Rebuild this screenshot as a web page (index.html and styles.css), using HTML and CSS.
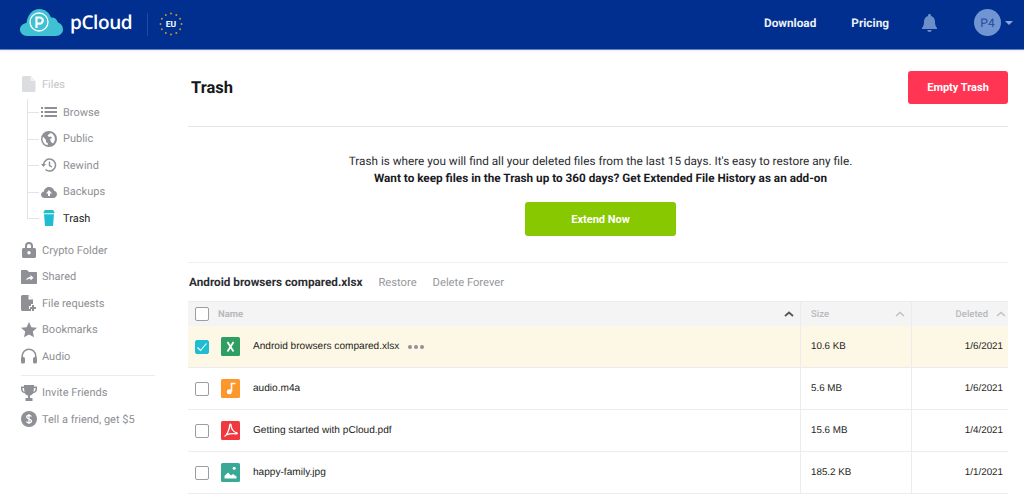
FILE: index.html
```html
<!DOCTYPE html>
<html lang="en">
<head>
<meta charset="utf-8">
<title>pCloud - Trash</title>
<link rel="stylesheet" href="styles.css">
</head>
<body>
<header class="topbar">
  <div class="brand">
    <svg class="logo" width="43" height="27" viewBox="0 0 43 27">
      <path fill="#3fc1d3" d="M7 27C3 27 0 24 0 20.500 0 17 3 14.500 6.500 14 7.500 6 12.500 0 19.500 0 25 0 29 3.500 31 8.500 34 8 37 10 38 13.500 41 14.500 43 17 43 20.500 43 24 40 27 36 27Z"/>
      <circle cx="19" cy="13" r="9" fill="none" stroke="#fff" stroke-width="1.300"/>
      <path fill="none" stroke="#fff" stroke-width="2.200" d="M16.500 19V8.500h3.200a3.100 3.100 0 0 1 0 6.200h-3.200"/>
    </svg>
    <span class="wordmark">pCloud</span>
    <span class="brand-sep"></span>
    <svg class="eu" width="24" height="24" viewBox="0 0 24 24">
      <g fill="#c2982f">
        <circle cx="12" cy="1.500" r="1"/><circle cx="17.300" cy="2.900" r="1"/><circle cx="21.100" cy="6.800" r="1"/><circle cx="22.500" cy="12" r="1"/><circle cx="21.100" cy="17.300" r="1"/><circle cx="17.300" cy="21.100" r="1"/><circle cx="12" cy="22.500" r="1"/><circle cx="6.800" cy="21.100" r="1"/><circle cx="2.900" cy="17.300" r="1"/><circle cx="1.500" cy="12" r="1"/><circle cx="2.900" cy="6.800" r="1"/><circle cx="6.800" cy="2.900" r="1"/>
      </g>
      <text x="12" y="15" text-anchor="middle" class="eu-text">EU</text>
    </svg>
  </div>
  <nav class="topnav">
    <a class="topnav-link link-download">Download</a>
    <a class="topnav-link link-pricing">Pricing</a>
    <svg class="bell" width="15" height="18" viewBox="0 0 15 18"><path fill="#6d8fc9" d="M7.500 0C8.400 0 9 .6 9 1.500v.4c2.500.7 4 2.900 4 5.600 0 3.500.7 4.800 2 6.500v1H0v-1c1.300-1.700 2-3 2-6.500 0-2.700 1.500-4.900 4-5.600v-.4C6 .6 6.600 0 7.500 0ZM5.300 16h4.400a2.200 2 0 0 1-4.400 0Z"/></svg>
    <div class="avatar">P4</div>
    <span class="caret"></span>
  </nav>
</header>

<div class="layout">
  <aside class="sidebar">
    <div class="side-item top-item">
      <svg class="ico" width="14" height="16" viewBox="0 0 14 16"><path fill="#dcdde0" d="M1.500 0H8.500L13.500 5V14.500a1.500 1.500 0 0 1-1.500 1.500H1.500A1.500 1.500 0 0 1 0 14.500V1.500A1.500 1.500 0 0 1 1.500 0Z"/><path fill="#f2f2f3" d="M8.500 0V5H13.500Z"/></svg>
      <span class="faded">Files</span>
    </div>
    <div class="tree">
      <div class="side-item tree-item">
        <svg class="ico" width="16" height="16" viewBox="0 0 16 16"><path fill="#8f9095" d="M0 3h2v2H0Zm3.500 0H16v2H3.500ZM0 7h2v2H0Zm3.500 0H16v2H3.500ZM0 11h2v2H0Zm3.500 0H16v2H3.500Z"/></svg>
        <span>Browse</span>
      </div>
      <div class="side-item tree-item">
        <svg class="ico" width="16" height="16" viewBox="0 0 16 16"><path fill="#8f9095" fill-rule="evenodd" d="M8 0a8 8 0 1 1 0 16A8 8 0 0 1 8 0ZM2 5.500 1.500 8c0 3 2 5.500 5 6.300L7 12.500 5 11V9L2 5.500ZM10 2l-2 1-1.500 1.500L8 6l2-.5 1 1.500-2 1 1 3 2 1.500A6.500 6.500 0 0 0 10 2Z"/></svg>
        <span>Public</span>
      </div>
      <div class="side-item tree-item">
        <svg class="ico" width="16" height="16" viewBox="0 0 16 16"><path fill="none" stroke="#8f9095" stroke-width="1.500" d="M2.500 8a6 6 0 1 1 2 4.500"/><path fill="#8f9095" d="M0 7h5L2.500 10Z"/><path fill="none" stroke="#8f9095" stroke-width="1.400" d="M8.500 4.500V8.500L11 10"/></svg>
        <span>Rewind</span>
      </div>
      <div class="side-item tree-item">
        <svg class="ico" width="16" height="16" viewBox="0 0 16 16"><path fill="#8f9095" fill-rule="evenodd" d="M3.500 14C1.500 14 0 12.500 0 10.700 0 9 1.200 7.700 2.800 7.400 3.300 4.700 5.500 3 8.200 3c2.400 0 4.400 1.500 5 3.700 1.600.4 2.800 1.900 2.800 3.600 0 2-1.600 3.700-3.700 3.700ZM8 6 5 9.500h2V12h2V9.500h2Z"/></svg>
        <span>Backups</span>
      </div>
      <div class="side-item tree-item active">
        <svg class="ico" width="16" height="16" viewBox="0 0 16 16"><path fill="#1fbcd2" d="M3.500 0h9v1.200l1 .5v1.600h-11V1.700l1-.5ZM3 4.300h10L12 16H4Z"/></svg>
        <span>Trash</span>
      </div>
    </div>
    <div class="group">
      <div class="side-item top-item">
        <svg class="ico" width="14" height="16" viewBox="0 0 14 16"><path fill="#8f9095" fill-rule="evenodd" d="M3 6V4a4 4 0 0 1 8 0v2h1.500c.8 0 1.500.7 1.500 1.500v7c0 .8-.7 1.500-1.500 1.500h-11C.7 16 0 15.300 0 14.500v-7C0 6.700.7 6 1.500 6ZM5 6h4V4a2 2 0 0 0-4 0ZM7 9a1.700 1.700 0 1 0 0 3.400A1.700 1.700 0 0 0 7 9Z"/></svg>
        <span>Crypto Folder</span>
      </div>
      <div class="side-item top-item">
        <svg class="ico" width="16" height="14" viewBox="0 0 16 14"><path fill="#8f9095" fill-rule="evenodd" d="M1 0h5l2 2h7c.6 0 1 .4 1 1v10c0 .6-.4 1-1 1H1c-.6 0-1-.4-1-1V1C0 .4.400 0 1 0Zm8.500 5v1.800C7 7 5.500 8.500 5 10.500 6.200 9.300 7.500 8.800 9.500 8.800v1.700L12.500 7.700Z"/></svg>
        <span>Shared</span>
      </div>
      <div class="side-item top-item">
        <svg class="ico" width="16" height="16" viewBox="0 0 16 16"><path fill="#8f9095" d="M1.500 0H7.500L12 4.500V9H10V11H8V14H10V16H1.500A1.500 1.500 0 0 1 0 14.500V1.500A1.500 1.500 0 0 1 1.500 0Z"/><path fill="#fff" d="M7.500 0V4.500H12Z"/><path fill="#8f9095" d="M11 10h2v2h2v2h-2v2h-2v-2H9v-2h2Z"/></svg>
        <span>File requests</span>
      </div>
      <div class="side-item top-item">
        <svg class="ico" width="16" height="16" viewBox="0 0 16 16"><path fill="#8f9095" d="M8 0l2.400 5.200 5.600.6-4.200 3.800 1.200 5.600L8 12.400 3 15.200l1.200-5.600L0 5.800l5.600-.6Z"/></svg>
        <span>Bookmarks</span>
      </div>
      <div class="side-item top-item">
        <svg class="ico" width="16" height="16" viewBox="0 0 16 16"><path fill="none" stroke="#8f9095" stroke-width="1.600" d="M1.200 11V8a6.800 6.800 0 0 1 13.600 0v3"/><rect fill="#8f9095" x="0" y="9" width="4" height="6.500" rx="1.500"/><rect fill="#8f9095" x="12" y="9" width="4" height="6.500" rx="1.500"/></svg>
        <span>Audio</span>
      </div>
    </div>
    <div class="side-divider"></div>
    <div class="side-item top-item">
      <svg class="ico" width="16" height="16" viewBox="0 0 16 16"><path fill="#8f9095" fill-rule="evenodd" d="M3 0h10v1.500h3V4c0 2.500-1.600 4-3.800 4.300C11.500 9.500 10.500 10.300 9 10.600V13h2.500v3h-7v-3H7v-2.400C5.500 10.300 4.500 9.500 3.800 8.300 1.600 8 0 6.500 0 4V1.500h3ZM1.500 3v1c0 1.500.8 2.500 2 2.800L3 3Zm13 0H13l-.5 3.800c1.200-.3 2-1.300 2-2.800Z"/></svg>
      <span>Invite Friends</span>
    </div>
    <div class="side-item top-item">
      <svg class="ico" width="16" height="16" viewBox="0 0 16 16"><circle cx="8" cy="8" r="8" fill="#8f9095"/><path fill="none" stroke="#fff" stroke-width="1.300" d="M10.500 5.500C10 4.600 9 4.300 8 4.300 6.700 4.300 5.700 5 5.700 6s1 1.500 2.300 1.900 2.500 1 2.500 2.100-1.200 1.800-2.500 1.800c-1.100 0-2.100-.4-2.600-1.300M8 3v10"/></svg>
      <span>Tell a friend, get $5</span>
    </div>
  </aside>

  <main class="content">
    <div class="page-head">
      <h1 class="page-title">Trash</h1>
      <button class="btn btn-red">Empty Trash</button>
    </div>
    <section class="notice">
      <p class="notice-line">Trash is where you will find all your deleted files from the last 15 days. It's easy to restore any file.</p>
      <p class="notice-line notice-strong">Want to keep files in the Trash up to 360 days? Get Extended File History as an add-on</p>
      <button class="btn btn-green">Extend Now</button>
    </section>
    <div class="selection-bar">
      <span class="selected-name">Android browsers compared.xlsx</span>
      <a class="action">Restore</a>
      <a class="action">Delete Forever</a>
    </div>
    <div class="table">
      <div class="row head">
        <div class="cell-name">
          <span class="check"></span>
          <span class="head-label">Name</span>
          <svg class="sort dark" width="10" height="6" viewBox="0 0 10 6"><path fill="none" stroke="#55565a" stroke-width="1.800" d="M1 5l4-3.500L9 5"/></svg>
        </div>
        <div class="cell-size">
          <span class="head-label">Size</span>
          <svg class="sort" width="10" height="6" viewBox="0 0 10 6"><path fill="none" stroke="#bfc0c4" stroke-width="1.400" d="M1 5l4-3.500L9 5"/></svg>
        </div>
        <div class="cell-date">
          <span class="head-label">Deleted</span>
          <svg class="sort date-sort" width="10" height="6" viewBox="0 0 10 6"><path fill="none" stroke="#bfc0c4" stroke-width="1.400" d="M1 5l4-3.500L9 5"/></svg>
        </div>
      </div>
      <div class="row selected">
        <div class="cell-name">
          <span class="check checked"><svg width="12" height="10" viewBox="0 0 12 10"><path fill="none" stroke="#fff" stroke-width="1.100" d="M1.500 5.500l3 3 6-7"/></svg></span>
          <svg class="file" width="19" height="19" viewBox="0 0 19 19"><rect width="19" height="19" rx="1.500" fill="#2f9e62"/><path fill="none" stroke="#fff" stroke-width="1.800" d="M6.500 5l6 9.500M12.500 5l-6 9.500"/></svg>
          <span class="file-name">Android browsers compared.xlsx</span>
          <span class="dots"><i></i><i></i><i></i></span>
        </div>
        <div class="cell-size">10.6 KB</div>
        <div class="cell-date">1/6/2021</div>
      </div>
      <div class="row">
        <div class="cell-name">
          <span class="check"></span>
          <svg class="file" width="19" height="19" viewBox="0 0 19 19"><rect width="19" height="19" rx="1.500" fill="#fd972b"/><path fill="none" stroke="#fff" stroke-width="1.600" d="M10.500 12.500V4.500h4"/><circle cx="8.300" cy="12.800" r="2.500" fill="#fff"/></svg>
          <span class="file-name">audio.m4a</span>
        </div>
        <div class="cell-size">5.6 MB</div>
        <div class="cell-date">1/6/2021</div>
      </div>
      <div class="row">
        <div class="cell-name">
          <span class="check"></span>
          <svg class="file" width="19" height="19" viewBox="0 0 19 19"><rect width="19" height="19" rx="1.500" fill="#f0383f"/><path fill="none" stroke="#fff" stroke-width="1.300" d="M3.500 15.500C5.500 14.500 8.500 9 8.800 3.800 9 3 10 3 10 4c0 3 2 7 6 8 .5.200.3 1-.5.900-3.500-.5-7-.2-10.500 1"/></svg>
          <span class="file-name">Getting started with pCloud.pdf</span>
        </div>
        <div class="cell-size">15.6 MB</div>
        <div class="cell-date">1/4/2021</div>
      </div>
      <div class="row">
        <div class="cell-name">
          <span class="check"></span>
          <svg class="file" width="19" height="19" viewBox="0 0 19 19"><rect width="19" height="19" rx="1.500" fill="#39a996"/><circle cx="13.200" cy="5.200" r="1.500" fill="#fff"/><path fill="#fff" d="M3.500 15.500V13L7 9.500 10 12.500 12 11 15.500 13.500V15.500Z"/></svg>
          <span class="file-name">happy-family.jpg</span>
        </div>
        <div class="cell-size">185.2 KB</div>
        <div class="cell-date">1/1/2021</div>
      </div>
    </div>
  </main>
</div>
</body>
</html>
```

FILE: styles.css
```css
* { box-sizing: border-box; }
html, body { margin: 0; padding: 0; }
body {
  width: 1024px;
  height: 494px;
  overflow: hidden;
  background: #fff;
  font-family: Roboto, "Liberation Sans", sans-serif;
  color: #1d1e22;
  text-rendering: geometricPrecision;
}
p, h1 { margin: 0; }

.topbar {
  height: 50px;
  background: #002f8f;
  border-bottom: 1px solid #5f80c4;
  box-shadow: 0 1px 2px rgba(0,0,0,.08);
  display: flex;
  justify-content: space-between;
  align-items: center;
  padding: 0 11px 1px 20px;
}
.brand { display: flex; align-items: center; }
.logo { display: block; margin-top: -3px; }
.wordmark {
  color: #fff;
  font-family: "Open Sans", sans-serif;
  font-size: 19px;
  font-weight: 600;
  letter-spacing: -.4px;
  margin-left: 7px;
  line-height: 24px;
  margin-top: -4px;
}
.brand-sep {
  width: 1px;
  height: 23px;
  background: #1f4a9e;
  margin: 0 11px 0 15px;
}
.eu { display: block; margin-top: -1px; }
.eu-text { fill: #fff; font: 700 8.500px Roboto, sans-serif; }

.topnav { display: flex; align-items: center; }
.topnav-link {
  color: #fff;
  font-size: 11.800px;
  font-weight: 700;
  opacity: .93;
  margin-top: -3px;
}
.link-pricing { margin-left: 35px; }
.bell { margin-left: 33px; margin-top: -3px; }
.avatar {
  width: 27px;
  height: 27px;
  border-radius: 50%;
  background: #7195d2;
  color: #234b9e;
  font-size: 12px;
  display: flex;
  align-items: center;
  justify-content: center;
  margin-left: 37px;
  margin-top: -3px;
}
.caret {
  width: 0;
  height: 0;
  border: 4px solid transparent;
  border-top: 4px solid #8ea8da;
  border-bottom: 0;
  margin-left: 4px;
  margin-top: -3px;
}

.layout { display: flex; }

.sidebar {
  width: 188px;
  flex: none;
  padding: 21px 0 0 21px;
}
.side-item {
  height: 26.500px;
  display: flex;
  align-items: center;
  font-size: 11px;
  color: #8e8f94;
}
.top-item .ico { margin-right: 5px; }
.top-item svg { width: 16px; flex: none; }
.faded { color: #c4c5c9; }
.tree {
  margin-left: 6px;
  border-left: 1px solid #e4e4e6;
  height: 120px;
  margin-top: 1.500px;
}
.tree-item { position: relative; padding-left: 13px; }
.tree-item::before {
  content: "";
  position: absolute;
  left: 0;
  top: 13px;
  width: 11px;
  height: 1px;
  background: #e4e4e6;
}
.tree-item .ico { margin-right: 6px; flex: none; }
.tree-item.active { color: #1d1e22; }
.group { margin-top: 18px; }
.side-divider {
  width: 134px;
  height: 1px;
  background: #ececee;
  margin: 5px 0 4px;
}

.content { width: 820px; flex: none; }
.page-head {
  height: 77px;
  border-bottom: 1px solid #e6e6e8;
  display: flex;
  justify-content: space-between;
  align-items: flex-start;
  padding: 21px 0 0 3px;
}
.page-title { font-size: 16.500px; font-weight: 700; line-height: 35px; color: #16171a; }
.btn {
  border: 0;
  border-radius: 3px;
  color: #fff;
  font-family: inherit;
  font-weight: 700;
  font-size: 11px;
  padding: 0;
}
.btn-red { width: 100px; height: 33px; background: #ff3553; }
.btn-green {
  display: block;
  width: 151px;
  height: 34px;
  margin: 16px auto 0;
  background: #88c800;
}
.notice {
  height: 136px;
  border-bottom: 1px solid #f0f0f1;
  padding: 26px 0 0 5px;
  text-align: center;
}
.notice-line { font-size: 11.750px; line-height: 16.500px; color: #2b2c31; }
.notice-strong { font-weight: 700; color: #1a1b1f; }

.selection-bar {
  height: 38px;
  display: flex;
  align-items: center;
  font-size: 11.200px;
  padding-left: 1px;
}
.selected-name { font-weight: 700; color: #2c2d33; margin-right: 16px; font-size: 11.750px; }
.action { color: #96979c; margin-right: 16px; }

.table { border-top: 1px solid #ececee; }
.row {
  height: 42px;
  display: grid;
  grid-template-columns: 612px 111px 97px;
  border-bottom: 1px solid #ececee;
  font-family: "Liberation Sans", Arial, sans-serif;
  font-size: 9.800px;
  color: #1d1e22;
}
.row > div { display: flex; align-items: center; }
.row.head { height: 24px; background: #f4f4f5; border-bottom: 0; }
.row.selected { background: #fdf7e5; }
.cell-name { padding-left: 7px; position: relative; }
.cell-size { border-left: 1px solid #ececee; padding-left: 10px; justify-content: space-between; padding-right: 6px; }
.cell-date { border-left: 1px solid #ececee; justify-content: flex-end; padding-right: 5px; }
.check {
  width: 14px;
  height: 14px;
  flex: none;
  border: 1px solid #9c9da1;
  border-radius: 2px;
  background: #fff;
  display: flex;
  align-items: center;
  justify-content: center;
}
.check.checked { background: #1fbcd2; border-color: #1fbcd2; }
.head-label { font-family: Roboto, sans-serif; color: #b8b9bd; font-weight: 700; font-size: 9.500px; }
.cell-name .head-label { margin-left: 9px; }
.cell-size .head-label, .cell-date .head-label { font-weight: 500; }
.cell-name .sort { position: absolute; right: 6px; top: 9px; }
.date-sort { margin-left: 8px; margin-right: -3px; }
.file { flex: none; margin-left: 12px; }
.file-name { margin-left: 13px; font-size: 10.100px; }
.dots { display: flex; gap: 2px; margin-left: 9px; }
.dots i { width: 4px; height: 4px; border-radius: 50%; background: #8f9095; }
```
